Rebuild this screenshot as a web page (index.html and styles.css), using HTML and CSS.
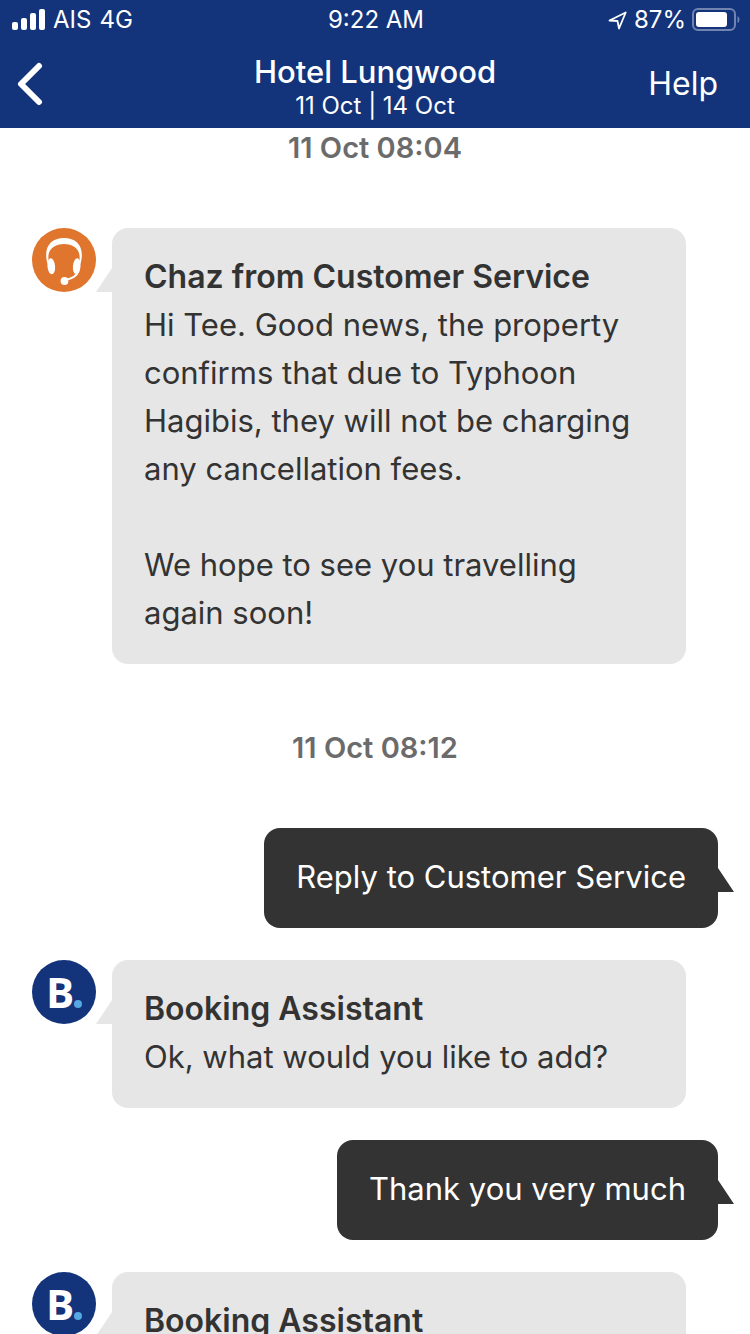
FILE: index.html
```
<!DOCTYPE html>
<html lang="en">
<head>
<meta charset="utf-8">
<meta name="viewport" content="width=device-width, initial-scale=1">
<title>Hotel Lungwood</title>
<link rel="stylesheet" href="styles.css">
</head>
<body>
<header class="header">
  <div class="status">
    <div class="status-left">
      <svg class="signal" viewBox="0 0 33 22" width="33" height="22" fill="#fff" aria-hidden="true">
        <rect x="0" y="13" width="6" height="8" rx="2"/>
        <rect x="9" y="9" width="6" height="12" rx="2"/>
        <rect x="18" y="4" width="6" height="17" rx="2"/>
        <rect x="27" y="0" width="6" height="21" rx="2"/>
      </svg>
      <span>AIS</span>
      <span>4G</span>
    </div>
    <div class="time">9:22 AM</div>
    <div class="status-right">
      <svg viewBox="0 0 20 20" width="20" height="20" aria-hidden="true">
        <path d="M1.500 10.500 17.700 2.500 11 18.500 9.500 11Z" fill="none" stroke="#fff" stroke-width="1.800" stroke-linejoin="round"/>
      </svg>
      <span>87%</span>
      <svg viewBox="0 0 48 24" width="48" height="24" aria-hidden="true">
        <rect x="1" y="1" width="42" height="21" rx="5" fill="none" stroke="#7184b0" stroke-width="2"/>
        <rect x="4" y="4" width="31" height="15" rx="3" fill="#fff"/>
        <path d="M45.500 8v7q2-1 2-3.500t-2-3.500z" fill="#7184b0"/>
      </svg>
    </div>
  </div>
  <nav class="nav">
    <button class="back" type="button" aria-label="Back">
      <svg viewBox="0 0 28 44" width="28" height="44" fill="none" stroke="#fff" stroke-width="6" stroke-linecap="round" stroke-linejoin="round" aria-hidden="true">
        <path d="M23 4 5 22 23 40"/>
      </svg>
    </button>
    <div class="heading">
      <h1 class="title">Hotel Lungwood</h1>
      <p class="dates">11 Oct | 14 Oct</p>
    </div>
    <button class="help" type="button">Help</button>
  </nav>
</header>
<main class="chat">
  <time class="stamp">11 Oct 08:04</time>
  <article class="row">
    <svg class="avatar" viewBox="0 0 64 64" aria-hidden="true">
      <circle cx="32" cy="32" r="32" fill="#e0752e"/>
      <path d="M15.500 36C11 20 18 10 32 10s21 10 16.500 26l-1.500-2C50 22 42 16 32 16s-18 6-15 18z" fill="#fff"/>
      <ellipse cx="19.300" cy="38.300" rx="3.800" ry="8" transform="rotate(-5 19.300 38.300)" fill="#fff"/>
      <ellipse cx="44.700" cy="38.300" rx="3.800" ry="8" transform="rotate(5 44.700 38.300)" fill="#fff"/>
      <path d="M47 42C45 48.500 40 50.500 33 52" fill="none" stroke="#fff" stroke-width="1.800"/>
      <circle cx="32.500" cy="53" r="3.900" fill="#fff"/>
    </svg>
    <div class="bubble">
      <h2 class="sender">Chaz from Customer Service</h2>
      <p>Hi Tee. Good news, the property confirms that due to Typhoon Hagibis, they will not be charging any cancellation fees.</p>
      <p class="para">We hope to see you travelling again soon!</p>
    </div>
  </article>
  <time class="stamp later">11 Oct 08:12</time>
  <article class="row own">
    <div class="bubble"><p>Reply to Customer Service</p></div>
  </article>
  <article class="row">
    <div class="avatar brand">B<span class="dot"></span></div>
    <div class="bubble">
      <h2 class="sender">Booking Assistant</h2>
      <p>Ok, what would you like to add?</p>
    </div>
  </article>
  <article class="row own">
    <div class="bubble"><p>Thank you very much</p></div>
  </article>
  <article class="row">
    <div class="avatar brand">B<span class="dot"></span></div>
    <div class="bubble">
      <h2 class="sender">Booking Assistant</h2>
    </div>
  </article>
</main>
</body>
</html>
```
FILE: styles.css
```
* { box-sizing: border-box; }
body {
  margin: 0;
  height: 100vh;
  display: flex;
  flex-direction: column;
  overflow: hidden;
  background: #fff;
  color: #333;
  font-family: Inter, "Liberation Sans", sans-serif;
  font-size: 31px;
  line-height: 48px;
}
h1, h2, p { margin: 0; font-size: inherit; }
button {
  border: 0;
  padding: 0;
  background: none;
  color: inherit;
  font: inherit;
}
.header {
  flex: none;
  background: #13347a;
  color: #fff;
}
.status {
  display: grid;
  grid-template-columns: 1fr auto 1fr;
  align-items: center;
  height: 40px;
  padding: 0 10px 0 12px;
  font-size: 24px;
  line-height: 40px;
}
.status-left, .status-right { display: flex; align-items: center; gap: 8px; }
.status-right { justify-content: flex-end; gap: 6px; }
.nav {
  display: grid;
  grid-template-columns: 1fr auto 1fr;
  align-items: center;
  height: 88px;
  padding: 0 32px 0 16px;
}
.back { justify-self: start; display: flex; }
.help { justify-self: end; font-size: 32px; }
.heading { padding: 8px 0 0 16px; text-align: center; }
.title { font-size: 31px; line-height: 36px; font-weight: 500; }
.dates { font-size: 24px; line-height: 32px; }
.chat {
  flex: 1;
  min-height: 0;
  display: flex;
  flex-direction: column;
  gap: 32px;
  padding: 0 32px;
  overflow: hidden;
}
.stamp {
  flex: none;
  margin-bottom: 28px;
  color: #6b6b6b;
  font-size: 29px;
  font-weight: 600;
  line-height: 40px;
  text-align: center;
}
.later { margin-top: 32px; }
.row {
  flex: none;
  display: flex;
  align-items: flex-start;
  gap: 16px;
  padding-right: 32px;
}
.own { justify-content: flex-end; padding-right: 0; }
.avatar { flex: none; width: 64px; height: 64px; }
.brand {
  display: flex;
  align-items: baseline;
  justify-content: center;
  border-radius: 50%;
  background: #13347a;
  color: #fff;
  font-family: "Open Sans", Inter, sans-serif;
  font-size: 42px;
  font-weight: 700;
  line-height: 64px;
}
.dot { width: 8px; height: 8px; border-radius: 50%; background: #57a7e2; }
.bubble {
  position: relative;
  flex: 1;
  padding: 25px 32px 27px;
  border-radius: 16px;
  background: #e6e6e6;
}
.bubble::before {
  content: "";
  position: absolute;
  top: 40px;
  left: -16px;
  width: 16px;
  height: 24px;
  background: inherit;
  clip-path: polygon(100% 0, 100% 100%, 0 100%);
}
.own .bubble { flex: none; background: #333; color: #fff; }
.own .bubble::before {
  left: auto;
  right: -16px;
  clip-path: polygon(0 0, 100% 100%, 0 100%);
}
.sender { font-size: 32px; font-weight: 600; }
.para { margin-top: 48px; }
```
